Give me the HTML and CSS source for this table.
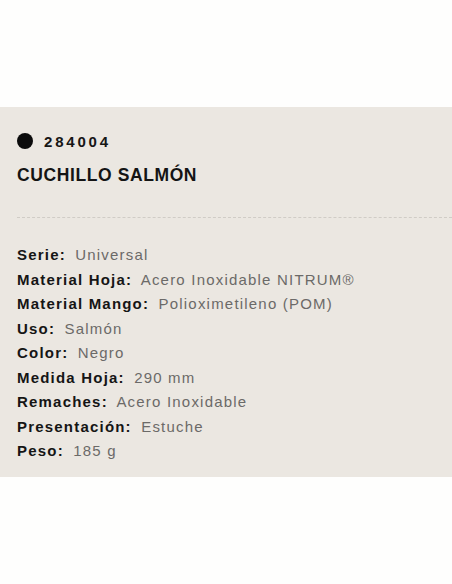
FILE: index.html
```html
<!DOCTYPE html>
<html lang="es">
<head>
<meta charset="utf-8">
<link rel="stylesheet" href="styles.css">
</head>
<body>
<section class="panel">
  <header class="head">
    <div class="ref"><span class="dot"></span><span class="code">284004</span></div>
    <h1 class="title">CUCHILLO SALMÓN</h1>
  </header>
  <hr class="sep">
  <ul class="specs">
    <li><b>Serie:</b> <span>Universal</span></li>
    <li><b>Material Hoja:</b> <span>Acero Inoxidable NITRUM®</span></li>
    <li><b>Material Mango:</b> <span>Polioximetileno (POM)</span></li>
    <li><b>Uso:</b> <span>Salmón</span></li>
    <li><b>Color:</b> <span>Negro</span></li>
    <li><b>Medida Hoja:</b> <span>290 mm</span></li>
    <li><b>Remaches:</b> <span>Acero Inoxidable</span></li>
    <li><b>Presentación:</b> <span>Estuche</span></li>
    <li><b>Peso:</b> <span>185 g</span></li>
  </ul>
</section>
</body>
</html>
```
FILE: styles.css
```css
html, body {
  margin: 0;
  padding: 0;
  background: #fefefd;
}
body {
  padding-top: 107px;
  font-family: "Liberation Sans", Arial, sans-serif;
}
.panel {
  background: #ebe7e1;
  height: 370px;
  box-sizing: border-box;
  padding: 26px 0 0 17px;
}
.head {
  display: flex;
  flex-direction: column;
  gap: 15px;
}
.ref {
  display: flex;
  align-items: center;
  gap: 11px;
  height: 16px;
}
.dot {
  width: 16px;
  height: 16px;
  border-radius: 50%;
  background: #0b0b0b;
}
.code {
  font-size: 15px;
  font-weight: 700;
  letter-spacing: 2.8px;
  color: #161616;
}
.title {
  margin: 0;
  font-size: 17.5px;
  font-weight: 700;
  letter-spacing: 0.6px;
  color: #141414;
  line-height: 22px;
}
.sep {
  margin: 31px 0 0 0;
  border: 0;
  border-top: 1px dashed #d0ccc6;
  height: 0;
}
.specs {
  list-style: none;
  margin: 0;
  padding: 25px 0 0 0;
  font-size: 15px;
  letter-spacing: 1.2px;
  line-height: 24.5px;
}
.specs li {
  white-space: nowrap;
}
.specs b {
  color: #151515;
  font-weight: 700;
  margin-right: 4px;
}
.specs span {
  color: #6b6a68;
}
```
